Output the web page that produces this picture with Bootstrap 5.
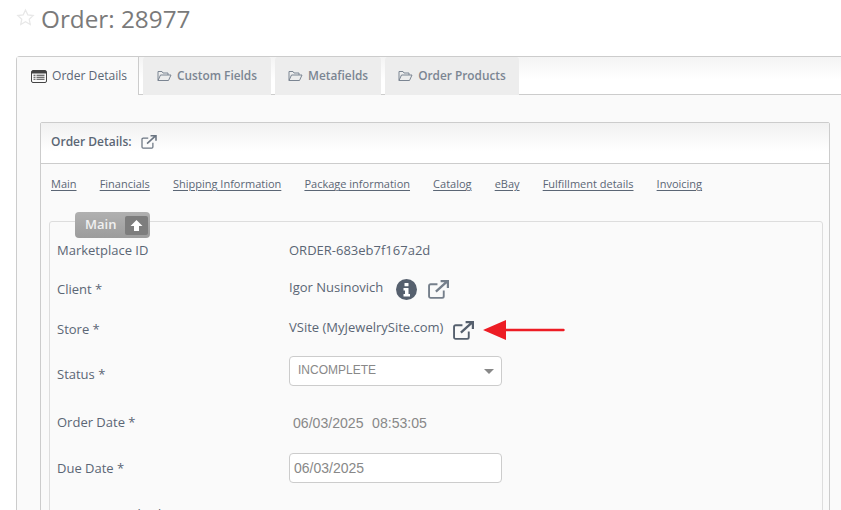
<!DOCTYPE html>
<html lang="en"><head><meta charset="utf-8"><title>Order</title>
<link href="https://cdn.jsdelivr.net/npm/bootstrap@5.3.0/dist/css/bootstrap.min.css" rel="stylesheet">
<style>
html,body{height:510px;overflow:hidden}
body{background:#fff;font-family:"Open Sans",sans-serif;color:#5b6675;font-size:13px;padding:0 0 0 16px}
.pg-title{height:56px;margin:0;font-size:24.3px;font-weight:400;color:#7a7a7a;font-family:"Open Sans",sans-serif;padding:5px 0 0 0;line-height:28px;display:flex;align-items:flex-start;gap:6px}
.pg-title svg{margin-top:3px}
.shell{width:840px;border:1px solid #ccc;border-right:0;border-radius:4px 0 0 0;background:#fafafa;height:600px}
.tabbar{display:flex;height:38px;background:linear-gradient(#f4f4f4,#fff 60%);border-bottom:1px solid #ccc;gap:4px;padding:0}
.tabx{height:38px;display:flex;align-items:center;gap:5px;padding:0 13px;font-size:11.85px;font-weight:600;background:#ededed;color:#7b8592;border-radius:3px 3px 0 0}
.tabx.wide{padding:0 14px}
.tabx.on{background:#fafafa;color:#5b6675;border-right:1px solid #ccc;border-radius:3px 0 0 0;width:122px;font-weight:500;padding:0 0 0 14px;font-size:12.1px}
.panelx{margin:27px 0 0 23px;width:790px;border:1px solid #ccc;border-radius:2px;height:500px}
.panel-head{height:41px;border-bottom:1px solid #ccc;background:linear-gradient(#f1f1f1,#fff 70%);display:flex;align-items:center;gap:9px;padding:0 0 2px 10px;font-size:12px;font-weight:600;color:#5b6675}
.jump{display:flex;gap:23.1px;padding:12px 0 0 10px;height:57px;font-size:11px}
.jump a{color:#5b6675;text-decoration:underline;text-underline-offset:2px}
.fset{position:relative;margin-left:8px;width:774px;border:1px solid #ddd;border-radius:3px;padding:17px 0 0 7px;height:400px}
.fbadge{position:absolute;left:25px;top:-10px;width:75px;height:26px;border-radius:4px;background:linear-gradient(#b0b0b0,#9c9c9c);color:#f0f0f0;font-size:13px;font-weight:600;display:flex;align-items:center;padding-left:10px;gap:9px}
.upbox{width:23px;height:19px;background:#7d7d7d;border-radius:2px;display:flex;align-items:center;justify-content:center}
.rowx{display:flex;align-items:center}
.lab{width:232px;font-size:13px;color:#5b6675;flex:none}
.lab.low{padding-top:8px}
.lab.low2{padding-top:2px}
.val{display:flex;align-items:center;font-size:13px}
.up4{margin-bottom:4px}.up2{margin-bottom:2px}
.r1{height:24px;margin-bottom:15px}.r2{height:24px;margin-bottom:16px}.r3{height:24px;margin-bottom:14px}.r4{height:30px;margin-bottom:22px}.r5{height:30px;margin-bottom:15px}.r6{height:30px;margin-bottom:22px}
.fieldx{width:213px;height:30px;background:#fff;border:1px solid #ccc;border-radius:4px;font:12px/28px "Liberation Sans",sans-serif;color:#888;padding:0 8px 2px;display:flex;align-items:center;justify-content:space-between}
.fieldx.dt{font-size:14px;padding:0 4px}
.caretx{width:0;height:0;border:5px solid transparent;border-top-color:#888;border-bottom:0;margin:2px -1px 0 0}
.stamp{font:14.1px "Liberation Sans",sans-serif;color:#888;padding-left:4px;display:flex;gap:8.5px}
.gap13{margin-left:13px}.gap11{margin-left:11px}.gap10{margin-left:10px}.gap9{margin-left:9px}
</style></head><body>
<h1 class="pg-title"><svg width="19" height="19" viewBox="0 0 24 24" fill="#fff" stroke="#e8e8e8" stroke-width="1.6"><path d="M12 2.500l2.900 6.200 6.800.8-5 4.600 1.300 6.700-6-3.400-6 3.400 1.300-6.700-5-4.600 6.800-.8z"/></svg><span>Order: 28977</span></h1>
<div class="shell">
<div class="tabbar">
<div class="tabx on"><svg width="16" height="13" viewBox="0 0 16 13"><rect x=".5" y=".5" width="15" height="12" rx="1.500" fill="none" stroke="#444"/><rect x="1" y="1" width="14" height="2.500" fill="#444"/><path d="M2.500 5.200h2M2.500 7.200h2M2.500 9.200h2M5.500 5.200h8M5.500 7.200h8M5.500 9.200h8" stroke="#444" stroke-width="1.100"/></svg><span>Order Details</span></div>
<div class="tabx wide"><svg width="15" height="12" viewBox="0 0 15 12" fill="none" stroke="#7b8592"><path d="M1 10.500V1.500h4l1 1.500h5v2M1 10.500h10.500l2.500-5.500H3.500z"/></svg><span>Custom Fields</span></div>
<div class="tabx"><svg width="15" height="12" viewBox="0 0 15 12" fill="none" stroke="#7b8592"><path d="M1 10.500V1.500h4l1 1.500h5v2M1 10.500h10.500l2.500-5.500H3.500z"/></svg><span>Metafields</span></div>
<div class="tabx"><svg width="15" height="12" viewBox="0 0 15 12" fill="none" stroke="#7b8592"><path d="M1 10.500V1.500h4l1 1.500h5v2M1 10.500h10.500l2.500-5.500H3.500z"/></svg><span>Order Products</span></div>
</div>
<div class="panelx">
<div class="panel-head"><span>Order Details:</span><svg width="16" height="14" viewBox="0 0 20 18" fill="none" stroke="#6b7582" stroke-width="1.600"><path d="M15 10v5.500a1.500 1.500 0 0 1-1.500 1.500h-11A1.500 1.500 0 0 1 1 15.500v-10A1.500 1.500 0 0 1 2.500 4H9"/><path d="M7.500 11L18 1.500M12 1h7v6.500" stroke-width="2"/></svg></div>
<div class="jump"><a href="#">Main</a><a href="#">Financials</a><a href="#">Shipping Information</a><a href="#">Package information</a><a href="#">Catalog</a><a href="#">eBay</a><a href="#">Fulfillment details</a><a href="#">Invoicing</a></div>
<div class="fset">
<div class="fbadge"><span>Main</span><span class="upbox"><svg width="13" height="13" viewBox="0 0 13 13" fill="#fff"><path d="M6.500 1L12.500 7H9v5H4V7H.5z"/></svg></span></div>
<div class="rowx r1"><div class="lab">Marketplace ID</div><div class="val">ORDER-683eb7f167a2d</div></div>
<div class="rowx r2"><div class="lab">Client *</div><div class="val"><span class="up4">Igor Nusinovich</span><svg class="gap13 up2" width="21" height="21" viewBox="0 0 21 21"><circle cx="10.500" cy="10.500" r="10.500" fill="#56606e"/><rect x="8.500" y="4" width="4" height="3.200" rx=".5" fill="#fff"/><path d="M7.500 9h5v6h1.500v2.500H7.500V15H9v-3.500H7.500z" fill="#fff"/></svg><svg class="gap11 up2" width="21" height="19" viewBox="0 0 20 18" fill="none" stroke="#757f8b" stroke-width="1.800"><path d="M15 10v5.500a1.500 1.500 0 0 1-1.500 1.500h-11A1.500 1.500 0 0 1 1 15.500v-10A1.500 1.500 0 0 1 2.500 4H9"/><path d="M7.500 11L18 1.500M12 1h7v6.500" stroke-width="2.200"/></svg></div></div>
<div class="rowx r3"><div class="lab">Store *</div><div class="val"><span class="up4">VSite (MyJewelrySite.com)</span><svg class="gap10" width="21" height="19" viewBox="0 0 20 18" fill="none" stroke="#56606e" stroke-width="1.800"><path d="M15 10v5.500a1.500 1.500 0 0 1-1.500 1.500h-11A1.500 1.500 0 0 1 1 15.500v-10A1.500 1.500 0 0 1 2.500 4H9"/><path d="M7.500 11L18 1.500M12 1h7v6.500" stroke-width="2.200"/></svg><svg class="gap9" width="82" height="20" viewBox="0 0 82 20" fill="#ed1c24"><path d="M0 10L23 0v8.800h57.500a1.200 1.200 0 0 1 0 2.400H23V20z"/></svg></div></div>
<div class="rowx r4"><div class="lab low">Status *</div><div class="fieldx"><span>INCOMPLETE</span><span class="caretx"></span></div></div>
<div class="rowx r5"><div class="lab">Order Date *</div><div class="stamp"><span>06/03/2025</span><span>08:53:05</span></div></div>
<div class="rowx r6"><div class="lab low2">Due Date *</div><div class="fieldx dt">06/03/2025</div></div>
<div class="rowx"><div class="lab">Payment Method</div></div>
</div>
</div>
</div>
<script src="https://cdn.jsdelivr.net/npm/bootstrap@5.3.0/dist/js/bootstrap.bundle.min.js"></script>
</body></html>
